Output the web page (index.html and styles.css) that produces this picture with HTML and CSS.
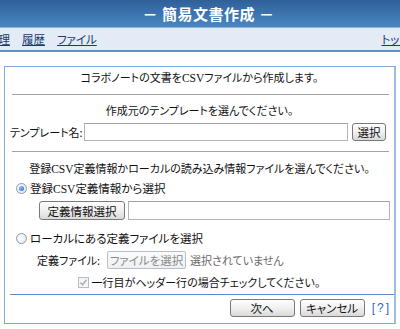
FILE: index.html
```html
<!DOCTYPE html>
<html lang="ja">
<head>
<meta charset="utf-8">
<title>簡易文書作成</title>
<link rel="stylesheet" href="styles.css">
</head>
<body>
<header class="header"><h1 class="title">－ 簡易文書作成 －</h1></header>
<nav class="nav">
  <div class="nav-left">
    <a class="nav-link first" href="#">管理</a>
    <a class="nav-link" href="#">履歴</a>
    <a class="nav-link" href="#">ファイル</a>
  </div>
  <a class="nav-link top" href="#">トップ</a>
</nav>
<main class="box">
  <div class="inner">
    <p class="line center first-line">コラボノートの文書を<span class="latin">CSV</span>ファイルから作成します。</p>
    <hr class="rule">
    <p class="line center p2">作成元のテンプレートを選んでください。</p>
    <div class="row tpl-row">
      <span class="label">テンプレート名:</span>
      <span class="field tpl-field"></span>
      <button class="btn sel-btn">選択</button>
    </div>
    <hr class="rule rule2">
    <p class="line center p3">登録<span class="latin">CSV</span>定義情報かローカルの読み込み情報ファイルを選んでください。</p>
    <label class="line radio-row r1"><span class="radio checked"></span><span class="opt">登録<span class="latin">CSV</span>定義情報から選択</span></label>
    <div class="row def-row">
      <button class="btn def-btn">定義情報選択</button>
      <span class="field def-field"></span>
    </div>
    <label class="line radio-row r2"><span class="radio"></span><span class="opt">ローカルにある定義ファイルを選択</span></label>
    <div class="row file-row">
      <span class="label file-label">定義ファイル:</span>
      <button class="btn file-btn" disabled>ファイルを選択</button>
      <span class="file-none">選択されていません</span>
    </div>
    <label class="line check-row"><span class="check"><svg width="9" height="9" viewBox="0 0 9 9"><path d="M1.5 4.5 L3.5 6.8 L7.5 1.8" fill="none" stroke="#a8b0b8" stroke-width="1.4"/></svg></span><span class="opt">一行目がヘッダー行の場合チェックしてください。</span></label>
  </div>
  <div class="footer">
    <button class="btn foot-btn">次へ</button>
    <button class="btn foot-btn">キャンセル</button>
    <a class="help" href="#">[?]</a>
  </div>
</main>
</body>
</html>
```
FILE: styles.css
```css
* { box-sizing: border-box; }
html, body { margin: 0; padding: 0; background: #fff; }
body {
  font-family: "Noto Sans CJK JP", "Noto Sans", sans-serif;
  font-size: 11px;
  font-feature-settings: "palt";
  color: #111;
  width: 400px;
  overflow: hidden;
}
.latin { font-family: "Liberation Serif", "Noto Sans CJK JP", serif; font-size: 11.5px; }

.header {
  height: 28px;
  background: linear-gradient(#2f6098, #3f77b2 60%, #4b86c2);
  border-bottom: 1px solid #8fb5de;
  display: flex;
  align-items: center;
  justify-content: center;
  padding-left: 17px;
}
.title {
  margin: 0;
  color: #fff;
  font-size: 15px;
  font-weight: bold;
  line-height: 20px;
  letter-spacing: 0.5px;
  font-feature-settings: normal;
}

.nav {
  height: 24px;
  background: #e3ebf6;
  border-bottom: 2px solid #5d8fc8;
  display: flex;
  align-items: center;
  justify-content: space-between;
  overflow: hidden;
}
.nav-left { display: flex; gap: 12px; }
.nav-link {
  color: #1a3a6e;
  text-decoration: underline;
  font-size: 11.5px;
  line-height: 14px;
  white-space: nowrap;
}
.nav-link.first { margin-left: -13px; }
.nav-link.top { margin-right: -10px; }

.box {
  margin: 14px 4px 0;
  height: 258px;
  border: 1px solid #82aad9;
  border-right: 2px solid #9cbde3;
  display: flex;
  flex-direction: column;
}
.inner {
  padding: 3px 0 0;
  border-bottom: 1px solid #5a8ccb;
  height: 228px;
  margin-left: 5px;
}
.line { display: block; margin: 0; line-height: 14px; height: 14px; white-space: nowrap; }
.center { text-align: center; margin-left: -5px; }
.rule {
  border: 0;
  border-top: 1px solid #a3a3a3;
  margin: 10px 5px 0 2px;
  height: 1px;
}
.p2 { margin-top: 8px; }
.row { display: flex; align-items: center; height: 18px; }
.tpl-row { margin-top: 6px; }
.label { white-space: nowrap; }
.tpl-row .label { width: 74px; }
.field {
  display: block;
  height: 18px;
  border: 1px solid #b2b6bc;
  border-top-color: #9ea3aa;
  background: #fff;
}
.tpl-field { width: 264px; }
.btn {
  font-family: "Noto Sans CJK JP", sans-serif;
  font-size: 11.5px;
  font-feature-settings: "palt";
  line-height: 14px;
  height: 18px;
  padding: 0 4px;
  border: 1px solid #7a7a7a;
  border-radius: 3px;
  background: linear-gradient(#fefefe, #f0f0f0 50%, #d9d9d9);
  color: #111;
  display: flex;
  align-items: center;
  justify-content: center;
  white-space: nowrap;
}
.sel-btn { margin-left: 4px; width: 34px; }
.rule2 { margin-top: 10px; }
.p3 { margin-top: 9px; }
.radio-row { display: flex; align-items: center; gap: 3px; padding-left: 6px; font-size: 11.5px; }
.r1 { margin-top: 6px; }
.radio {
  width: 11px; height: 11px;
  border-radius: 50%;
  border: 1px solid #8d9aab;
  background: radial-gradient(circle at 40% 40%, #ffffff, #dfe3e8);
  display: flex; align-items: center; justify-content: center;
  flex: none;
}
.radio.checked::after {
  content: "";
  width: 5px; height: 5px; border-radius: 50%;
  background: radial-gradient(circle at 35% 35%, #8fc0ff, #1f5fc8);
}
.def-row { margin-top: 6px; padding-left: 29px; height: 19px; }
.def-btn { width: 86px; height: 19px; }
.def-field { margin-left: 3px; width: 262px; height: 19px; }
.r2 { margin-top: 11px; }
.file-row { margin-top: 6px; padding-left: 27px; }
.file-label { width: 70px; }
.file-btn {
  width: 79px;
  color: #8a8a8a;
  border-color: #b9bfc6;
  background: linear-gradient(#fbfbfb, #eef0f2);
  border-radius: 2px;
}
.file-none { margin-left: 4px; color: #6a6a6a; white-space: nowrap; }
.check-row { margin-top: 6px; display: flex; align-items: center; justify-content: center; gap: 3px; margin-left: -6px; }
.check {
  width: 11px; height: 11px;
  border: 1px solid #b5bcc4;
  background: #f4f5f6;
  display: flex; align-items: center; justify-content: center;
  flex: none;
}
.footer {
  display: flex;
  justify-content: flex-end;
  align-items: center;
  gap: 5px;
  padding: 4px 3px 0 0;
}
.foot-btn { width: 65px; }
.help {
  color: #2f5fcf;
  text-decoration: none;
  letter-spacing: 2px;
  margin-left: 2px;
  font-family: "Liberation Sans", sans-serif;
  font-size: 12px;
}
```
